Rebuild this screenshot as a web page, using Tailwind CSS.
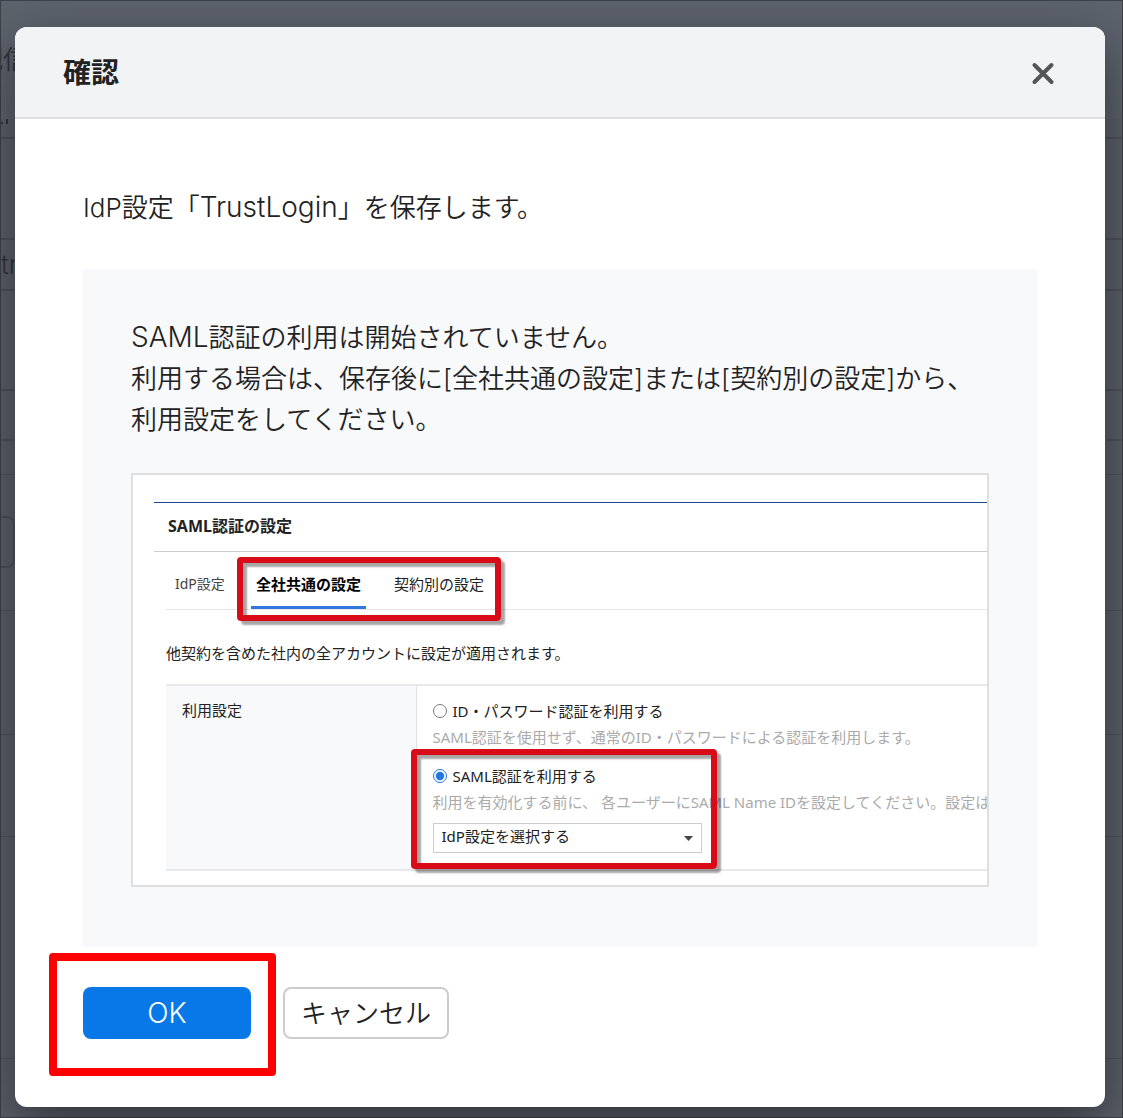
<!DOCTYPE html>
<html lang="ja">
<head>
<meta charset="utf-8">
<meta name="viewport" content="width=device-width, initial-scale=1">
<title>確認</title>
<script src="https://cdn.jsdelivr.net/npm/@tailwindcss/browser@4"></script>
</head>
<body class="relative min-h-screen overflow-x-hidden bg-[#5d636d] font-[Inter,'Noto_Sans_CJK_JP',sans-serif] text-[26px] font-[350] text-[#222]">

<!-- Dimmed settings page behind the dialog -->
<div aria-hidden="true" class="absolute inset-0 flex flex-col overflow-hidden border border-[#3d4148] bg-[#5b5f69] text-[#30343c]">
  <div class="h-[118px] shrink-0 bg-[#5d636d] pt-10 leading-[38px]"><span class="-ml-6 whitespace-nowrap">配信</span></div>
  <div class="flex h-5 shrink-0 gap-[3px] border-b-2 border-[#4d515a]"><span class="mt-[3px] size-[2px] bg-[#30343c]"></span><span class="h-[5px] w-[2px] bg-[#30343c]"></span></div>
  <div class="h-[101px] shrink-0 border-b-2 border-[#4d515a]"></div>
  <div class="h-[51px] shrink-0 border-b-2 border-[#4d515a] leading-[50px]">trustlogin</div>
  <div class="h-[100px] shrink-0 border-b-2 border-[#4d515a]"></div>
  <div class="h-[50px] shrink-0 border-b-2 border-[#4d515a]"></div>
  <div class="h-[34px] shrink-0 border-b border-[#4f535c]"></div>
  <div class="h-[136px] shrink-0 border-b border-[#4f535c] pt-[41px]"><div class="-ml-4 h-[52px] w-[30px] rounded-lg border-2 border-[#4d515a]"></div></div>
  <div class="h-[124px] shrink-0 border-b border-[#4f535c]"></div>
  <div class="h-[102px] shrink-0 border-b border-[#4f535c]"></div>
  <div class="h-[222px] shrink-0 border-b border-[#4f535c]"></div>
</div>

<main class="relative pt-[27px] pr-[18px] pb-[11px] pl-[15px]">
  <section role="dialog" aria-labelledby="dialog-title" class="rounded-[12px] bg-white shadow-[0_16px_48px_rgba(0,0,0,0.45)]">
    <header class="flex h-[92px] items-center justify-between rounded-t-[12px] border-b-2 border-[#dfdfdf] bg-[#f2f3f5] px-12 pt-[2px]">
      <h1 id="dialog-title" class="text-[28px] font-bold">確認</h1>
      <button type="button" aria-label="閉じる" class="flex size-7 items-center justify-center">
        <svg viewBox="0 0 28 28" class="size-7" fill="none" stroke="#555" stroke-width="4" stroke-linecap="round"><path d="M5.500 6L22.500 23M22.500 6L5.500 23"/></svg>
      </button>
    </header>

    <div class="p-[68px]">
      <p class="leading-[42px]">IdP設定「<span class="text-[28px] leading-none">TrustLogin</span>」を保存します。</p>

      <div class="mt-10 bg-[#f8f9fb] px-12 pt-12 pb-[60px]">
        <p class="leading-[41px]"><span class="text-[28px] leading-none">SAML</span>認証の利用は開始されていません。<br>利用する場合は、保存後に[全社共通の設定]または[契約別の設定]から、<br>利用設定をしてください。</p>

        <!-- Illustration of the settings screen -->
        <div class="mt-[33px] overflow-hidden border-2 border-[#dfdfdf] bg-white pt-[27px] pb-[14px] pl-[21px] font-['Noto_Sans','Noto_Sans_CJK_JP',sans-serif] text-[15px] font-normal whitespace-nowrap">
          <h2 class="flex h-[50px] items-center border-t border-b border-t-[#164a8c] border-b-[#ccc] pb-[3px] pl-[14px] text-[16px] font-bold">SAML認証の設定</h2>
          <div class="pl-3">
            <nav class="flex h-[58px] items-stretch border-b border-[#e5e5e5]">
              <a href="#" class="flex w-[71px] items-center pt-[6px] pl-[9px] text-[14px] text-[#444]">IdP設定</a>
              <div class="relative flex pl-[14px]">
                <a href="#" class="flex w-[115px] items-center justify-center border-b-3 border-[#3178de] pt-[10px] font-bold text-black">全社共通の設定</a>
                <a href="#" class="flex w-[135px] items-center pt-2 pl-7">契約別の設定</a>
                <span class="absolute top-[5px] left-0 h-[64px] w-[264px] rounded-[4px] border-6 border-[#da0b18] shadow-[4px_4px_2px_rgba(0,0,0,0.35),inset_4px_4px_2px_rgba(0,0,0,0.35)]"></span>
              </div>
            </nav>
            <p class="mt-[31px] leading-6">他契約を含めた社内の全アカウントに設定が適用されます。</p>
            <table class="mt-[19px] w-full table-fixed border-y-2 border-[#e8e8e8]">
              <tbody>
                <tr>
                  <th scope="row" class="w-[250px] border-r border-[#e0e0e0] bg-[#f8f9fb] px-4 pt-3 text-left align-top leading-6 font-normal">利用設定</th>
                  <td class="h-[185px] pt-[13px] pl-4 align-top">
                    <label class="flex items-center gap-[6px] leading-6"><input type="radio" name="auth" class="m-0 size-[14px] shrink-0">ID・パスワード認証を利用する</label>
                    <p class="mt-0.5 leading-6 text-[#aaa]">SAML認証を使用せず、通常のID・パスワードによる認証を利用します。</p>
                    <div class="relative pt-[15px]">
                      <label class="flex items-center gap-[6px] leading-6"><input type="radio" name="auth" checked class="m-0 size-[14px] shrink-0 accent-[#2277e5]">SAML認証を利用する</label>
                      <p class="mt-0.5 leading-6 text-[#aaa]">利用を有効化する前に、 各ユーザーにSAML Name IDを設定してください。設定は、</p>
                      <div class="relative mt-[9px] w-[269px]">
                        <select aria-label="IdP設定" class="h-[30px] w-full appearance-none border border-[#ccc] bg-white pb-[3px] pl-2"><option>IdP設定を選択する</option></select>
                        <svg viewBox="0 0 9 5" class="pointer-events-none absolute top-[13px] right-[9px] h-[5px] w-[9px]" fill="#444"><path d="M0 0h9L4.500 5z"/></svg>
                      </div>
                      <span class="pointer-events-none absolute top-0 -left-[22px] h-[120px] w-[306px] rounded-[4px] border-6 border-[#da0b18] shadow-[4px_4px_2px_rgba(0,0,0,0.35),inset_4px_4px_2px_rgba(0,0,0,0.35)]"></span>
                    </div>
                  </td>
                </tr>
              </tbody>
            </table>
          </div>
        </div>
      </div>

      <div class="mt-10 flex gap-8">
        <div class="relative">
          <button type="submit" class="h-[52px] w-[168px] rounded-lg bg-[#0878e8] text-[28px] font-light text-white">OK</button>
          <span aria-hidden="true" class="pointer-events-none absolute -top-[34px] -left-[34px] h-[123px] w-[227px] rounded-[4px] border-8 border-[#f00]"></span>
        </div>
        <button type="button" class="h-[52px] rounded-lg border-2 border-[#ccc] bg-white px-4">キャンセル</button>
      </div>
    </div>
  </section>
</main>
</body>
</html>
